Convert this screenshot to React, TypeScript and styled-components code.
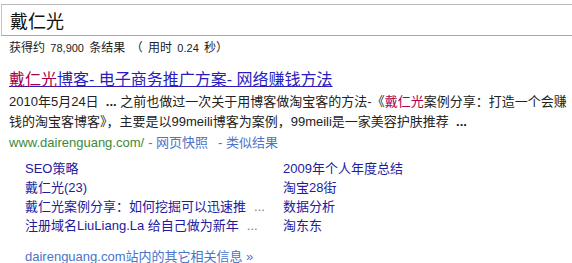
import React from "react";
import styled, { createGlobalStyle } from "styled-components";

const Global = createGlobalStyle`
  html, body { margin: 0; padding: 0; background: #fff; }
  body { font-family: "Liberation Sans", Arial, "Noto Sans CJK SC", sans-serif; color: #222; overflow: hidden; }
`;

const Page = styled.div`
  width: 572px;
  height: 263px;
  padding-top: 4px;
  box-sizing: border-box;
  overflow: hidden;
`;

const SearchBox = styled.div`
  margin-left: 1px;
  width: 620px;
  height: 32px;
  box-sizing: border-box;
  border: 1px solid #c4c4c4;
  border-bottom-color: #a8a8a8;
  border-top-color: #bbb;
  display: flex;
  align-items: center;
  padding-left: 8px;
  font-size: 18px;
  color: #111;
`;

const Stats = styled.div`
  padding-left: 9px;
  margin-top: 4px;
  font-size: 12px;
  line-height: 16px;
  color: #222;
  word-spacing: 2px;
  span { font-size: 11px; }
`;

const Result = styled.div`
  padding-left: 9px;
  margin-top: 12px;
`;

const Title = styled.a`
  display: block;
  font-size: 16px;
  line-height: 24px;
  color: #2a1cc0;
  text-decoration: underline;
  b { font-weight: normal; color: #a8004a; }
`;

const SnippetLine = styled.div`
  font-size: 13px;
  line-height: 20px;
  color: #222;
  white-space: nowrap;
  b { font-weight: normal; color: #a8004a; }
`;

const UrlLine = styled.div`
  font-size: 13px;
  line-height: 20px;
  margin-top: 1px;
`;

const Green = styled.span`
  color: #3b8a3b;
`;

const Gray = styled.a<{ $gap?: number }>`
  color: #4a74c9;
  text-decoration: none;
  margin-left: ${(p) => p.$gap ?? 0}px;
`;

const Sitelinks = styled.div`
  display: grid;
  grid-template-columns: 258px 260px;
  padding-left: 25px;
  margin-top: 6px;
`;

const SiteLink = styled.a`
  font-size: 13px;
  line-height: 19px;
  color: #231a9e;
  text-decoration: none;
  white-space: nowrap;
`;

const Ell = styled.span`
  color: #777;
  margin-left: 8px;
`;

const More = styled.a`
  display: block;
  margin-left: 25px;
  margin-top: 13px;
  font-size: 13px;
  line-height: 18px;
  color: #4a74c9;
  text-decoration: none;
`;

export default function App() {
  return (
    <>
      <Global />
      <Page>
        <SearchBox>戴仁光</SearchBox>
        <Stats>
          获得约 <span>78,900</span> 条结果 （ 用时 <span>0.24</span> 秒）
        </Stats>
        <Result>
          <Title>
            <b>戴仁光</b>博客- 电子商务推广方案- 网络赚钱方法
          </Title>
          <SnippetLine>
            2010年5月24日 &nbsp;<strong>...</strong> 之前也做过一次关于用博客做淘宝客的方法-《<b>戴仁光</b>案例分享：打造一个会赚
          </SnippetLine>
          <SnippetLine>
            钱的淘宝客博客》，主要是以99meili博客为案例，99meili是一家美容护肤推荐 &nbsp;<strong>...</strong>
          </SnippetLine>
          <UrlLine>
            <Green>www.dairenguang.com/</Green>
            <Gray $gap={4}>- 网页快照</Gray>
            <Gray $gap={10}>- 类似结果</Gray>
          </UrlLine>
        </Result>
        <Sitelinks>
          <SiteLink>SEO策略</SiteLink>
          <SiteLink>2009年个人年度总结</SiteLink>
          <SiteLink>戴仁光(23)</SiteLink>
          <SiteLink>淘宝28街</SiteLink>
          <SiteLink>
            戴仁光案例分享：如何挖掘可以迅速推<Ell>...</Ell>
          </SiteLink>
          <SiteLink>数据分析</SiteLink>
          <SiteLink>
            注册域名LiuLiang.La 给自己做为新年<Ell>...</Ell>
          </SiteLink>
          <SiteLink>淘东东</SiteLink>
        </Sitelinks>
        <More>dairenguang.com站内的其它相关信息 »</More>
      </Page>
    </>
  );
}
